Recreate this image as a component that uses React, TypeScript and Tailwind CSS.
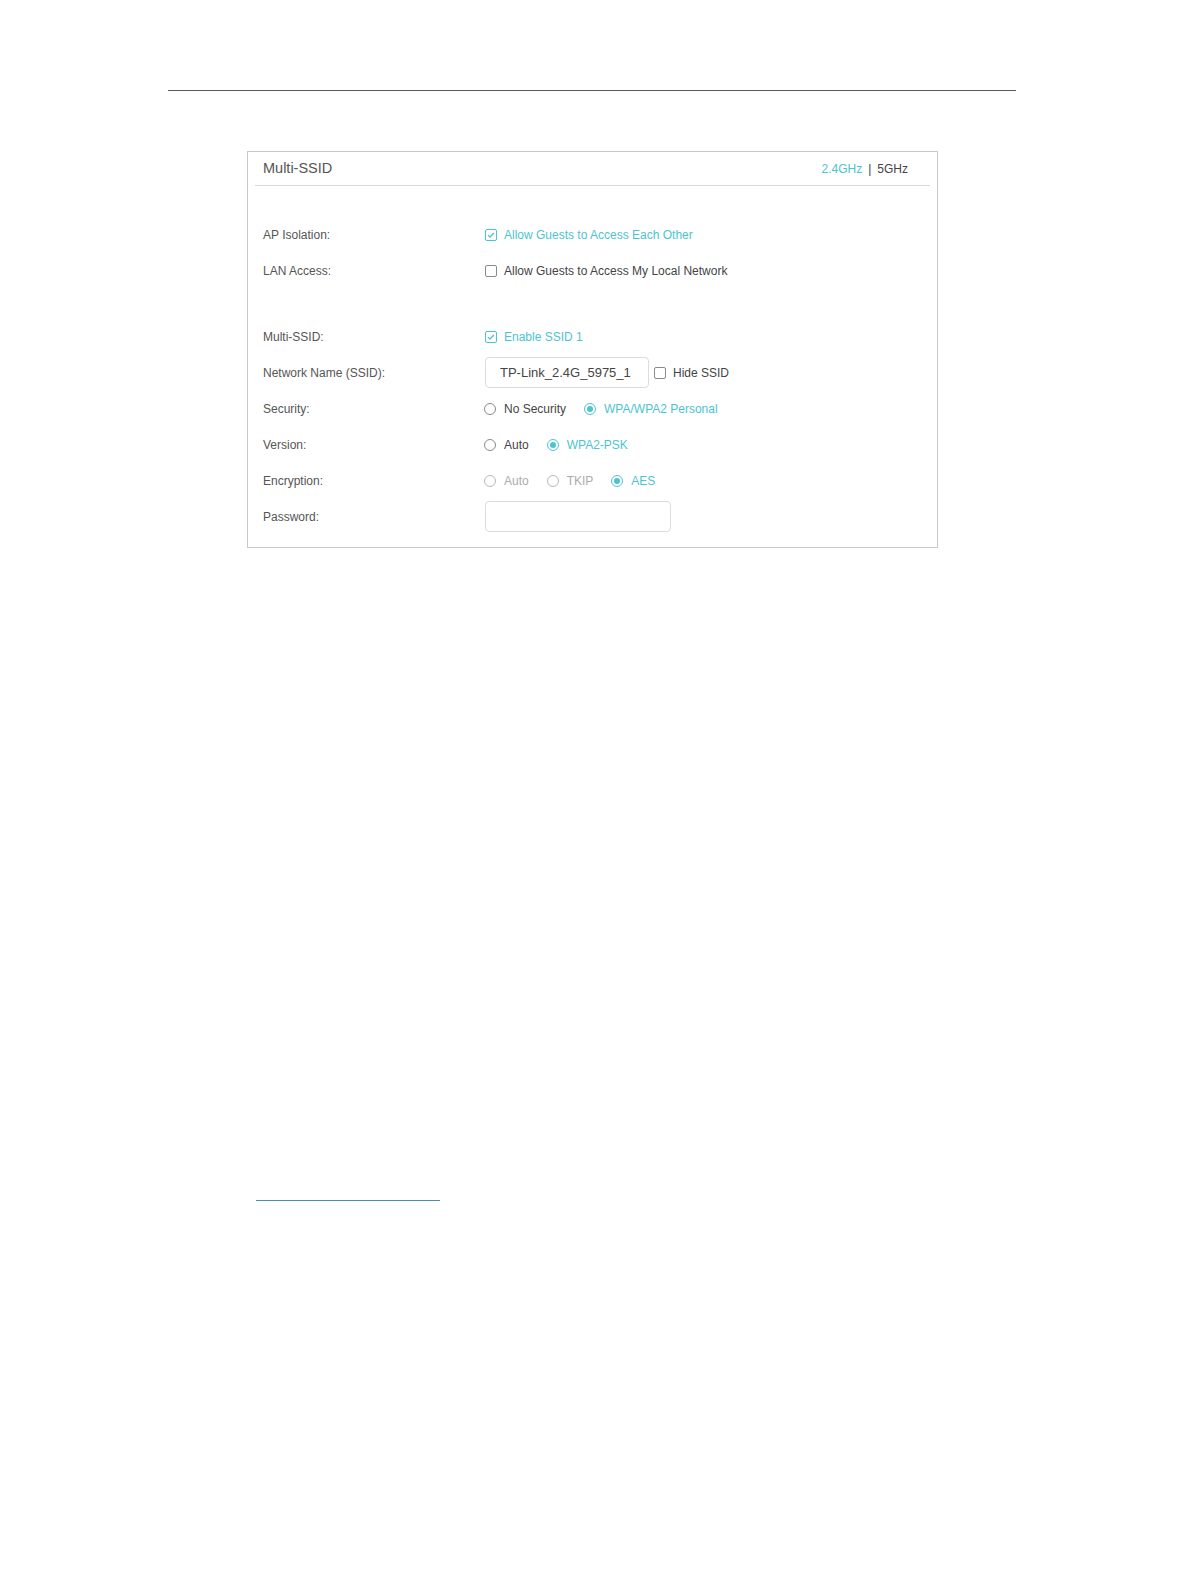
import React from 'react';

const teal = 'text-[#4cc4d0]';

const Checkbox: React.FC<{ checked?: boolean }> = ({ checked }) => (
  <span
    className={`flex h-[12px] w-[12px] items-center justify-center rounded-[2px] border ${
      checked ? 'border-[#4cc4d0]' : 'border-[#8a8a8a]'
    } bg-white`}
  >
    {checked && (
      <svg viewBox="0 0 12 12" className="h-[10px] w-[10px]">
        <path d="M2.5 6.2 L4.8 8.4 L9.4 3.6" fill="none" stroke="#4cc4d0" strokeWidth="1.5" />
      </svg>
    )}
  </span>
);

const Radio: React.FC<{ checked?: boolean; disabled?: boolean }> = ({ checked, disabled }) => (
  <span
    className={`flex h-[12px] w-[12px] items-center justify-center rounded-full border ${
      checked ? 'border-[#4cc4d0]' : disabled ? 'border-[#b8b8b8]' : 'border-[#8a8a8a]'
    } bg-white`}
  >
    {checked && <span className="h-[6px] w-[6px] rounded-full bg-[#4cc4d0]" />}
  </span>
);

const Option: React.FC<{ label: string; checked?: boolean; disabled?: boolean }> = ({
  label,
  checked,
  disabled,
}) => (
  <span className="flex items-center gap-[8px]">
    <Radio checked={checked} disabled={disabled} />
    <span className={checked ? teal : disabled ? 'text-[#ababab]' : 'text-[#444]'}>{label}</span>
  </span>
);

const Row: React.FC<{ label: string; children: React.ReactNode }> = ({ label, children }) => (
  <div className="flex h-[36px] items-center">
    <div className="w-[222px] shrink-0 text-[#555]">{label}</div>
    <div className="flex items-center">{children}</div>
  </div>
);

export default function App() {
  return (
    <div
      className="bg-white pb-[380px] text-[12px]"
      style={{ fontFamily: '"Liberation Sans", Arial, sans-serif' }}
    >
      <div className="pt-[90px]">
        <div className="ml-[168px] h-px w-[848px] bg-[#5a5a5a]" />
      </div>

      <div className="ml-[247px] mt-[60px] w-[691px] border border-[#c9c9c9] px-[7px] pb-[12px] pt-[6px]">
        <div className="flex items-center justify-between border-b border-[#d9d9d9] pb-[5px] pl-[8px] pr-[22px]">
          <span className="text-[14.5px] text-[#555]">Multi-SSID</span>
          <span className="flex items-center text-[12px]">
            <span className={teal}>2.4GHz</span>
            <span className="px-[6px] text-[#444]">|</span>
            <span className="text-[#444]">5GHz</span>
          </span>
        </div>

        <div className="pl-[8px] pt-[31px]">
          <Row label="AP Isolation:">
            <span className="flex items-center gap-[7px]">
              <Checkbox checked />
              <span className={teal}>Allow Guests to Access Each Other</span>
            </span>
          </Row>
          <Row label="LAN Access:">
            <span className="flex items-center gap-[7px]">
              <Checkbox />
              <span className="text-[#444]">Allow Guests to Access My Local Network</span>
            </span>
          </Row>

          <div className="h-[30px]" />

          <Row label="Multi-SSID:">
            <span className="flex items-center gap-[7px]">
              <Checkbox checked />
              <span className={teal}>Enable SSID 1</span>
            </span>
          </Row>
          <Row label="Network Name (SSID):">
            <div className="flex h-[31px] w-[164px] items-center rounded-[4px] border border-[#dcdcdc] pl-[14px] text-[13px] text-[#444]">
              TP-Link_2.4G_5975_1
            </div>
            <span className="ml-[5px] flex items-center gap-[7px]">
              <Checkbox />
              <span className="text-[#444]">Hide SSID</span>
            </span>
          </Row>
          <Row label="Security:">
            <span className="-ml-px flex items-center gap-[18px]">
              <Option label="No Security" />
              <Option label="WPA/WPA2 Personal" checked />
            </span>
          </Row>
          <Row label="Version:">
            <span className="-ml-px flex items-center gap-[18px]">
              <Option label="Auto" />
              <Option label="WPA2-PSK" checked />
            </span>
          </Row>
          <Row label="Encryption:">
            <span className="-ml-px flex items-center gap-[18px]">
              <Option label="Auto" disabled />
              <Option label="TKIP" disabled />
              <Option label="AES" checked />
            </span>
          </Row>
          <Row label="Password:">
            <div className="h-[31px] w-[186px] rounded-[4px] border border-[#dcdcdc]" />
          </Row>
        </div>
      </div>

      <div className="ml-[256px] mt-[652px] h-px w-[184px] bg-[#4a8fa3]" />
    </div>
  );
}
